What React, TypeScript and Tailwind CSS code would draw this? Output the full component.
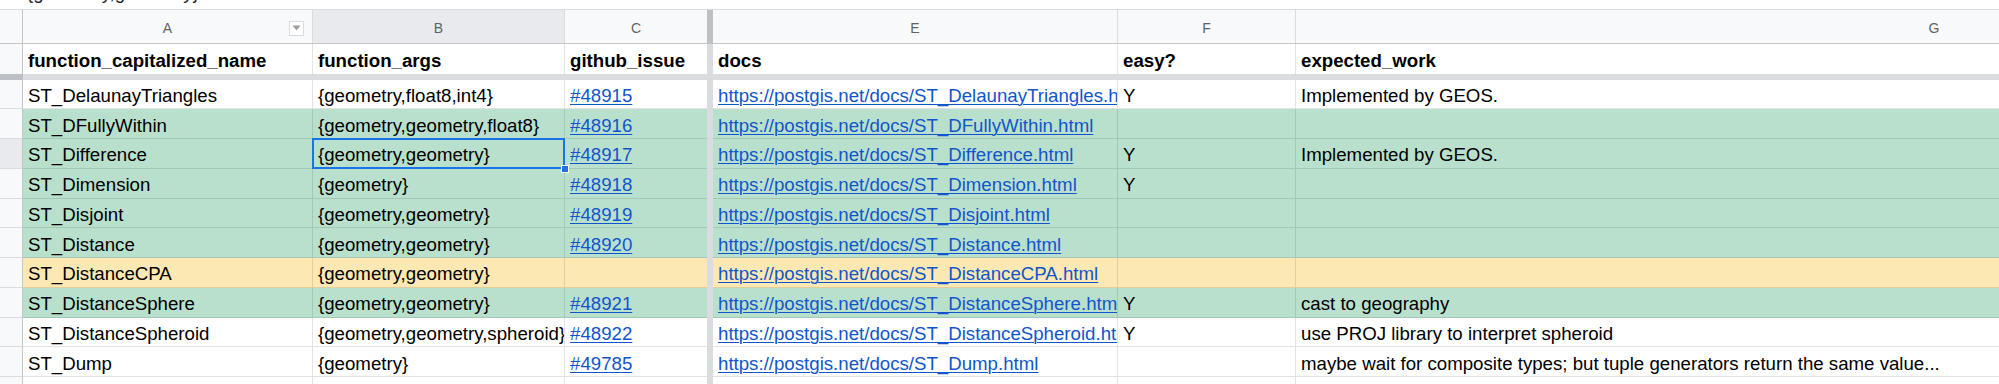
import React from "react";

const GREEN = "bg-[#b9e0cd]";
const YELLOW = "bg-[#fce8b2]";
const WHITE = "bg-white";

type Row = {
  a: string;
  b: string;
  c: string;
  e: string;
  f: string;
  g: string;
  bg: string;
  sel?: boolean;
};

const url = (n: string) => `https://postgis.net/docs/${n}.html`;

const rows: Row[] = [
  { a: "ST_DelaunayTriangles", b: "{geometry,float8,int4}", c: "#48915", e: url("ST_DelaunayTriangles"), f: "Y", g: "Implemented by GEOS.", bg: WHITE },
  { a: "ST_DFullyWithin", b: "{geometry,geometry,float8}", c: "#48916", e: url("ST_DFullyWithin"), f: "", g: "", bg: GREEN },
  { a: "ST_Difference", b: "{geometry,geometry}", c: "#48917", e: url("ST_Difference"), f: "Y", g: "Implemented by GEOS.", bg: GREEN, sel: true },
  { a: "ST_Dimension", b: "{geometry}", c: "#48918", e: url("ST_Dimension"), f: "Y", g: "", bg: GREEN },
  { a: "ST_Disjoint", b: "{geometry,geometry}", c: "#48919", e: url("ST_Disjoint"), f: "", g: "", bg: GREEN },
  { a: "ST_Distance", b: "{geometry,geometry}", c: "#48920", e: url("ST_Distance"), f: "", g: "", bg: GREEN },
  { a: "ST_DistanceCPA", b: "{geometry,geometry}", c: "", e: url("ST_DistanceCPA"), f: "", g: "", bg: YELLOW },
  { a: "ST_DistanceSphere", b: "{geometry,geometry}", c: "#48921", e: url("ST_DistanceSphere"), f: "Y", g: "cast to geography", bg: GREEN },
  { a: "ST_DistanceSpheroid", b: "{geometry,geometry,spheroid}", c: "#48922", e: url("ST_DistanceSpheroid"), f: "Y", g: "use PROJ library to interpret spheroid", bg: WHITE },
  { a: "ST_Dump", b: "{geometry}", c: "#49785", e: url("ST_Dump"), f: "", g: "maybe wait for composite types; but tuple generators return the same value...", bg: WHITE },
  { a: "", b: "", c: "", e: "", f: "", g: "", bg: WHITE },
];

const cellBase =
  "h-full shrink-0 flex items-center pl-[5px] overflow-hidden whitespace-nowrap border-r border-b border-[rgba(0,0,0,0.11)]";

function Link({ children }: { children: React.ReactNode }) {
  return <span className="text-[#1155cc] underline underline-offset-[2px] decoration-1">{children}</span>;
}

function FilterIcon() {
  return (
    <div className="w-[15px] h-[15px] border border-[#dadce0] bg-white flex items-center justify-center">
      <svg width="9" height="6" viewBox="0 0 9 6">
        <path d="M0.5 0.5 L8.5 0.5 L4.5 5.5 Z" fill="#a0a0a0" />
      </svg>
    </div>
  );
}

export default function App() {
  const font = { fontFamily: '"Liberation Sans", Arial, sans-serif' };
  return (
    <div className="w-[1999px] h-[384px] overflow-hidden bg-white text-black" style={font}>
      {/* formula bar remnant */}
      <div className="h-[9.5px] overflow-hidden border-b-[1.5px] border-[#dadce0]">
        <div className="-mt-[18px] pl-[27px] text-[18.67px] leading-[22px] text-[#202124]">{"{geometry,geometry}"}</div>
      </div>

      {/* column letters */}
      <div className="flex h-[34px] bg-[#f8f9fa] text-[#5f6368] text-[14px] border-b border-[#c4c7c5]">
        <div className="w-[23px] shrink-0 border-r border-[#c4c7c5]" />
        <div className="w-[290px] shrink-0 border-r border-[#dadce0] relative flex items-center justify-center pt-[5px]">
          <span>A</span>
          <div className="absolute right-[8px] top-[11px]">
            <FilterIcon />
          </div>
        </div>
        <div className="w-[252px] shrink-0 border-r border-[#dadce0] bg-[#e8eaed] flex items-center justify-center pt-[5px]">B</div>
        <div className="w-[142px] shrink-0 flex items-center justify-center pt-[5px]">C</div>
        <div className="w-[6px] shrink-0 bg-[#bdc1c6]" />
        <div className="w-[405px] shrink-0 border-r border-[#dadce0] flex items-center justify-center pt-[5px]">E</div>
        <div className="w-[178px] shrink-0 border-r border-[#dadce0] flex items-center justify-center pt-[5px]">F</div>
        <div className="w-[1276px] shrink-0 flex items-center justify-center pt-[5px]">G</div>
      </div>

      {/* field header row */}
      <div className="flex h-[30px] text-[18.67px] font-bold bg-white">
        <div className="w-[23px] shrink-0 h-full bg-[#f8f9fa] border-r border-[#c4c7c5]" />
        <div className={`${cellBase} w-[290px] border-b-0 pt-[5px]`}>function_capitalized_name</div>
        <div className={`${cellBase} w-[252px] border-b-0 pt-[5px]`}>function_args</div>
        <div className={`${cellBase} w-[142px] border-b-0 border-r-0 pt-[5px]`}>github_issue</div>
        <div className="w-[6px] shrink-0 h-full bg-[#dadce0]" />
        <div className={`${cellBase} w-[405px] border-b-0 pt-[5px]`}>docs</div>
        <div className={`${cellBase} w-[178px] border-b-0 pt-[5px]`}>easy?</div>
        <div className={`${cellBase} w-[1276px] border-b-0 pt-[5px]`}>expected_work</div>
      </div>

      {/* horizontal freeze bar */}
      <div className="flex h-[6px]">
        <div className="w-[23px] shrink-0 bg-[#bdc1c6]" />
        <div className="flex-1 bg-[#dadce0]" />
      </div>

      {/* data rows */}
      {rows.map((r, i) => (
        <div key={i} className={`flex h-[29.75px] text-[18.67px] ${r.bg}`}>
          <div
            className={`w-[23px] shrink-0 h-full border-r border-b border-r-[#c4c7c5] border-b-[#dadce0] ${
              r.sel ? "bg-[#e8eaed]" : "bg-[#f8f9fa]"
            }`}
          />
          <div className={`${cellBase} w-[290px] pt-[4px]`}>{r.a}</div>
          <div className={`${cellBase} w-[252px] pt-[4px] ${r.sel ? "relative overflow-visible z-10" : ""}`}>
            {r.b}
            {r.sel && (
              <>
                <div className="absolute -left-[1px] -top-[1px] -right-[1px] -bottom-[1px] border-2 border-[#1a73e8] pointer-events-none" />
                <div className="absolute -right-[5px] -bottom-[5px] w-[8px] h-[8px] bg-[#1a73e8] border border-white" />
              </>
            )}
          </div>
          <div className={`${cellBase} w-[142px] border-r-0 pt-[4px]`}>{r.c && <Link>{r.c}</Link>}</div>
          <div className="w-[6px] shrink-0 h-full bg-[#dadce0]" />
          <div className={`${cellBase} w-[405px] pt-[4px]`}>{r.e && <Link>{r.e}</Link>}</div>
          <div className={`${cellBase} w-[178px] pt-[4px]`}>{r.f}</div>
          <div className={`${cellBase} w-[1276px] pt-[4px]`}>{r.g}</div>
        </div>
      ))}
    </div>
  );
}
